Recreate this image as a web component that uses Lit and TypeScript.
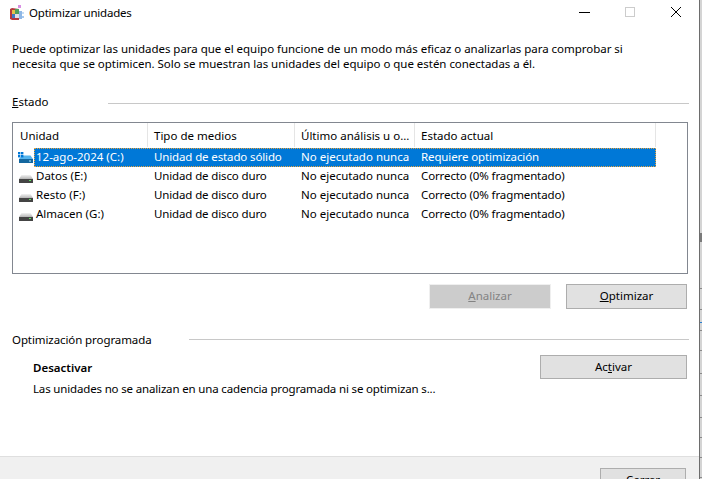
import { LitElement, html, css, svg } from "lit";
import { customElement } from "lit/decorators.js";

const hdd = svg`<svg class="ico" viewBox="0 0 16 16" width="16" height="16">
  <defs><linearGradient id="hg" x1="0" y1="0" x2="0" y2="1"><stop offset="0" stop-color="#f2f2f2"/><stop offset="1" stop-color="#b4b4b4"/></linearGradient></defs>
  <path d="M3.5 7 L12.5 7 L15 11 L1 11 Z" fill="url(#hg)"/>
  <rect x="1" y="11" width="14" height="4" fill="#444"/>
  <rect x="11" y="12" width="2" height="1" fill="#5fe05f"/>
</svg>`;
const ssd = svg`<svg class="ico" viewBox="0 0 16 16" width="16" height="16">
  <path d="M4 6.5 L12.5 6.5 L15 10 L1 10 Z" fill="#55b4ec"/>
  <rect x="1" y="10" width="14" height="4" fill="#14679f"/>
  <rect x="11" y="11.5" width="2" height="1" fill="#b5e8ff"/>
  <rect x="0" y="3" width="2.4" height="2.4" fill="#0078d7"/><rect x="3" y="3" width="2.4" height="2.4" fill="#0078d7"/>
  <rect x="0" y="6" width="2.4" height="2.4" fill="#0078d7"/><rect x="3" y="6" width="2.4" height="2.4" fill="#0078d7"/>
</svg>`;
const appIcon = svg`<svg class="app" viewBox="0 0 16 16" width="16" height="16">
  <path d="M1 4 L3 3 L10 4 L10 15 L3 15 L1 14 Z" fill="#b4383e"/>
  <rect x="3" y="5" width="3" height="4" fill="#e6bf4c"/>
  <rect x="6" y="4" width="4" height="5" fill="#4f9f5c"/>
  <rect x="3" y="9" width="3" height="4" fill="#3f78c4"/>
  <rect x="6" y="9" width="4" height="4" fill="#e2dce8"/>
  <rect x="10" y="6" width="3" height="8" fill="#8fb8e6"/>
  <rect x="9" y="0" width="3" height="3" fill="#d98fe4"/>
  <rect x="13" y="7" width="2" height="2" fill="#c4dcf5"/>
  <rect x="13" y="11" width="2" height="2" fill="#a5c8f0"/>
</svg>`;

const drives = [
  { n: "12-ago-2024 (C:)", t: "Unidad de estado sólido", a: "No ejecutado nunca", e: "Requiere optimización", sel: true },
  { n: "Datos (E:)", t: "Unidad de disco duro", a: "No ejecutado nunca", e: "Correcto (0% fragmentado)" },
  { n: "Resto (F:)", t: "Unidad de disco duro", a: "No ejecutado nunca", e: "Correcto (0% fragmentado)" },
  { n: "Almacen (G:)", t: "Unidad de disco duro", a: "No ejecutado nunca", e: "Correcto (0% fragmentado)" },
];

@customElement("app-root")
export class AppRoot extends LitElement {
  static styles = css`
    :host {
      display: flex;
      width: 702px;
      height: 479px;
      overflow: hidden;
      font-family: "Noto Sans", "Open Sans", sans-serif;
      font-size: 11.5px;
      color: #000;
      background: #fff;
    }
    .win {
      width: 699px;
      height: 479px;
      border-right: 1px solid #6d6d6d;
      display: flex;
      flex-direction: column;
      flex: none;
    }
    .edge {
      flex: none;
      width: 2px;
      height: 479px;
      background:
        linear-gradient(to bottom,
          transparent 233px, #7a7a7a 233px, #7a7a7a 242px, transparent 242px,
          transparent 288px, #8a8a8a 288px, #8a8a8a 289px, transparent 289px,
          transparent 309px, #8a8a8a 309px, #8a8a8a 310px, transparent 310px,
          transparent 322px, #2a7fd0 322px, #2a7fd0 323px, transparent 323px,
          transparent 330px, #8a8a8a 330px, #8a8a8a 331px, transparent 331px,
          transparent 350px, #8a8a8a 350px, #8a8a8a 351px, transparent 351px,
          transparent 373px, #8a8a8a 373px, #8a8a8a 374px, transparent 374px,
          transparent 395px, #8a8a8a 395px, #8a8a8a 396px, transparent 396px,
          transparent 417px, #8a8a8a 417px, #8a8a8a 418px, transparent 418px,
          transparent 437px, #8a8a8a 437px, #8a8a8a 438px, transparent 438px,
          transparent 457px, #8a8a8a 457px, #8a8a8a 458px, transparent 458px,
          transparent 477px, #8a8a8a 477px, #8a8a8a 478px, transparent 478px),
        #d4d4d4;
    }
    .title {
      height: 24px;
      display: flex;
      align-items: center;
      padding-left: 9px;
      gap: 4px;
      flex: none;
    }
    .title .name { flex: 1; letter-spacing: -0.2px; }
    .app { margin-top: 1px; }
    .caps { display: flex; align-items: center; }
    .cap { width: 46px; height: 24px; display: flex; align-items: center; justify-content: center; }
    .body { flex: 1; display: flex; flex-direction: column; padding: 17px 10px 0 12px; min-height: 0; }
    .intro { margin: 0; line-height: 15px; letter-spacing: -0.03px; }
    .legend { display: flex; align-items: center; margin-top: 23px; height: 16px; flex: none; }
    .legend .rule { height: 1px; background: #c8c8c8; flex: 1; }
    .legend span { margin-bottom: 2px; }
    .legend .a { width: 96px; }
    .legend .b { width: 177px; letter-spacing: -0.09px; white-space: nowrap; }
    .top-rule { margin-top: 3px; }
    .low-rule { margin-bottom: 1px; }
    .list {
      margin-top: 12px;
      height: 152px;
      border: 1px solid #828790;
      box-sizing: border-box;
      width: 676px;
      flex: none;
    }
    .row { display: grid; grid-template-columns: 134px 147px 120px 241px; width: 642px; height: 19px; align-items: center; margin-left: 1px; position: relative; }
    .head { height: 24px; margin-bottom: 1px; }
    .head span { height: 100%; display: flex; align-items: center; padding-left: 6px; border-right: 1px solid #e5e5e5; box-sizing: border-box; }
    .cell { padding: 0 0 2px 6px; box-sizing: border-box; white-space: nowrap; display: flex; align-items: center; height: 100%; position: relative; }
    .first { padding-left: 22px; padding-bottom: 0; }
    .nm, .plain { padding-bottom: 2px; }
    .kind { letter-spacing: -0.13px; }
    .state { letter-spacing: -0.12px; }
    .ico { position: absolute; left: 4px; top: 1px; }
    .sel { color: #fff; }
    .sel .cell { background: #0078d7; }
    .sel .first { background: transparent; }
    .sel::after {
      content: "";
      position: absolute;
      left: 20px; right: 0; top: 0; bottom: 0;
      border: 1px dotted #e8a33d;
      pointer-events: none;
    }
    .nm { background: #0078d7; height: 100%; box-sizing: border-box; display: flex; align-items: center; flex: 1; margin-left: -2px; padding-left: 2px; }
    .btns { display: flex; justify-content: flex-end; gap: 15px; margin: 10px 2px 0 0; flex: none; }
    button {
      font: inherit; color: #000; background: #e1e1e1; border: 1px solid #adadad;
      width: 121px; height: 25px; padding: 0 0 2px; box-sizing: border-box; margin: 0; flex: none;
    }
    button.off { width: 122px; background: #cccccc; color: #838383; border-color: #efefef; }
    u { text-underline-offset: 1px; }
    .detail { display: flex; justify-content: space-between; padding-left: 21px; margin-right: 2px; }
    .detail b { display: block; font-weight: 600; margin-top: 12px; line-height: 16px; }
    .detail p { margin: 5px 0 0; line-height: 16px; letter-spacing: -0.16px; }
    .detail button { width: 147px; height: 24px; margin-top: 7px; }
    .foot {
      flex: none; height: 23px; background: #f0f0f0; border-top: 1px solid #dfdfdf;
      display: flex; justify-content: flex-end; align-items: flex-start; padding: 11px 13px 0 0;
      overflow: hidden; box-sizing: border-box;
    }
    .foot button { width: 86px; height: 25px; }
  `;

  render() {
    return html`<div class="win">
      <div class="title">
        ${appIcon}<span class="name">Optimizar unidades</span>
        <div class="caps">
          <div class="cap"><svg width="11" height="10"><path d="M0 5.5H11" stroke="#000"/></svg></div>
          <div class="cap"><svg width="10" height="10"><rect x=".5" y=".5" width="9" height="9" fill="none" stroke="#ccc"/></svg></div>
          <div class="cap"><svg width="10" height="10"><path d="M0 0L10 10M10 0L0 10" stroke="#000"/></svg></div>
        </div>
      </div>
      <div class="body">
        <p class="intro">Puede optimizar las unidades para que el equipo funcione de un modo más eficaz o analizarlas para comprobar si<br />necesita que se optimicen. Solo se muestran las unidades del equipo o que estén conectadas a él.</p>
        <div class="legend"><span class="a"><u>E</u>stado</span><div class="rule top-rule"></div></div>
        <div class="list">
          <div class="row head"><span>Unidad</span><span>Tipo de medios</span><span>Último análisis u o...</span><span>Estado actual</span></div>
          ${drives.map((d) => html`<div class="row ${d.sel ? "sel" : ""}">
            <div class="cell first">${d.sel ? ssd : hdd}${d.sel ? html`<span class="nm">${d.n}</span>` : html`<span class="plain">${d.n}</span>`}</div>
            <div class="cell kind">${d.t}</div><div class="cell">${d.a}</div><div class="cell state">${d.e}</div>
          </div>`)}
        </div>
        <div class="btns">
          <button class="off"><u>A</u>nalizar</button>
          <button><u>O</u>ptimizar</button>
        </div>
        <div class="legend"><span class="b">Optimización programada</span><div class="rule low-rule"></div></div>
        <div class="detail">
          <div><b>Desactivar</b><p>Las unidades no se analizan en una cadencia programada ni se optimizan s...</p></div>
          <button>Ac<u>t</u>ivar</button>
        </div>
      </div>
      <div class="foot"><button>Cerrar</button></div>
    </div>
    <div class="edge"></div>`;
  }
}
